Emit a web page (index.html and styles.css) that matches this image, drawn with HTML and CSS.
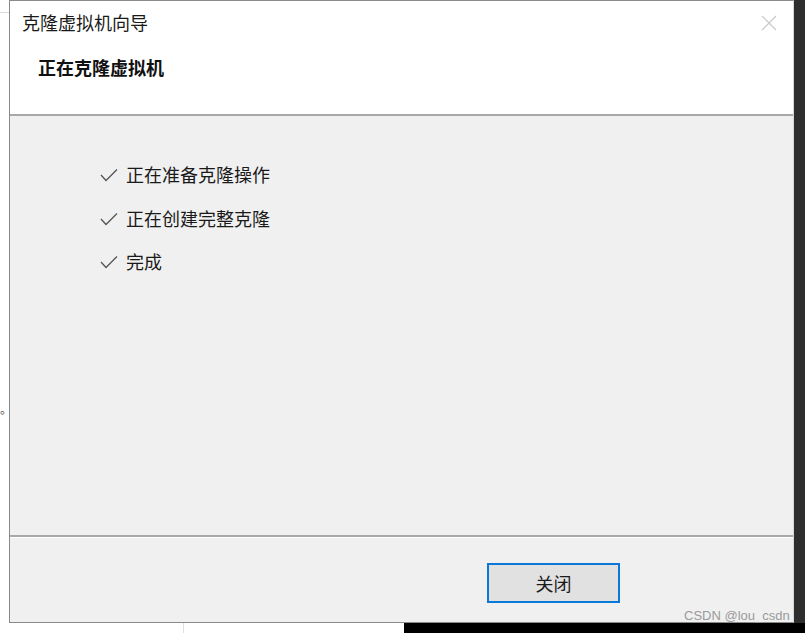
FILE: index.html
```html
<!DOCTYPE html>
<html lang="zh-CN">
<head>
<meta charset="utf-8">
<title>克隆虚拟机向导</title>
<link rel="stylesheet" href="styles.css">
</head>
<body>
<div class="screen">
  <div class="main-row">
    <div class="left-strip">
      <div class="left-line"></div>
      <span class="dot">。</span>
    </div>
    <div class="dialog">
      <div class="header">
        <div class="title-row">
          <span class="title">克隆虚拟机向导</span>
          <svg class="close" width="16" height="16" viewBox="0 0 16 16"><path d="M1 1 L15 15 M15 1 L1 15" stroke="#c8c8c8" stroke-width="1.2" fill="none"/></svg>
        </div>
        <div class="subtitle">正在克隆虚拟机</div>
      </div>
      <div class="content">
        <ul class="steps">
          <li class="step"><svg class="check" width="18" height="14" viewBox="0 0 18 14"><path d="M1 7 L6 12.5 L17 1.5" stroke="#555" stroke-width="1.3" fill="none"/></svg><span>正在准备克隆操作</span></li>
          <li class="step"><svg class="check" width="18" height="14" viewBox="0 0 18 14"><path d="M1 7 L6 12.5 L17 1.5" stroke="#555" stroke-width="1.3" fill="none"/></svg><span>正在创建完整克隆</span></li>
          <li class="step"><svg class="check" width="18" height="14" viewBox="0 0 18 14"><path d="M1 7 L6 12.5 L17 1.5" stroke="#555" stroke-width="1.3" fill="none"/></svg><span>完成</span></li>
        </ul>
      </div>
      <div class="footer">
        <button class="btn">关闭</button>
      </div>
    </div>
    <div class="right-strip"></div>
  </div>
  <div class="bottom-row">
    <div class="bottom-white"><div class="bottom-line"></div></div>
    <div class="bottom-black"></div>
  </div>
  <div class="watermark">CSDN @lou_csdn</div>
</div>
</body>
</html>
```
FILE: styles.css
```css
* { box-sizing: border-box; }
html, body { margin: 0; padding: 0; }
body {
  width: 805px;
  height: 633px;
  overflow: hidden;
  background: #fff;
  font-family: "Noto Sans CJK SC", "Noto Sans", sans-serif;
  color: #1a1a1a;
}
.screen { position: relative; width: 805px; height: 633px; }
.main-row { display: flex; height: 623px; }
.left-strip { width: 9px; background: #fff; position: relative; }
.left-line { height: 1px; background: #dcdcdc; margin-top: 12px; }
.dot { position: absolute; left: 0; top: 400px; font-size: 12px; color: #555; }
.dialog {
  width: 785px;
  border: 1px solid #8a8a8a;
  border-right: 1px solid #d8d8d8;
  display: flex;
  flex-direction: column;
  background: #f0f0f0;
}
.header {
  height: 115px;
  background: #fff;
  border-bottom: 2px solid #a8a8a8;
  padding: 0 0 0 12px;
}
.title-row {
  display: flex;
  justify-content: space-between;
  align-items: center;
  height: 44px;
  padding-right: 16px;
  padding-top: 0;
}
.title { font-size: 18px; line-height: 22px; color: #1a1a1a; margin-top: -3px; }
.close { margin-top: 0; }
.subtitle {
  font-size: 18px;
  font-weight: bold;
  line-height: 22px;
  padding-left: 16px;
  margin-top: 11px;
  color: #111;
}
.content {
  flex: 1;
  background: #f0f0f0;
  border-bottom: 2px solid #a8a8a8;
  padding: 47px 0 0 90px;
}
.steps { list-style: none; margin: 0; padding: 0; }
.step {
  display: flex;
  align-items: center;
  height: 22px;
  margin-bottom: 21.5px;
  font-size: 18px;
  color: #1a1a1a;
}
.check { margin-right: 8px; margin-top: 2px; }
.footer {
  height: 85px;
  background: #f0f0f0;
  border-top: 1px solid #fff;
  padding: 25px 0 0 477px;
}
.btn {
  width: 133px;
  height: 40px;
  background: #e1e1e1;
  border: 2px solid #0a78d7;
  font-family: "Noto Sans CJK SC", sans-serif;
  font-size: 18px;
  color: #1a1a1a;
  padding: 0;
}
.right-strip { flex: 1; background: #2e2e2e; }
.bottom-row { display: flex; height: 10px; }
.bottom-white { width: 404px; background: #fff; position: relative; }
.bottom-line { position: absolute; left: 183px; top: 0; width: 1px; height: 10px; background: #e0e0e0; }
.bottom-black { flex: 1; background: #000; }
.watermark {
  position: absolute;
  left: 684px;
  top: 608px;
  font-family: "Liberation Sans", sans-serif;
  font-size: 13px;
  color: #9a9a9a;
}
```
